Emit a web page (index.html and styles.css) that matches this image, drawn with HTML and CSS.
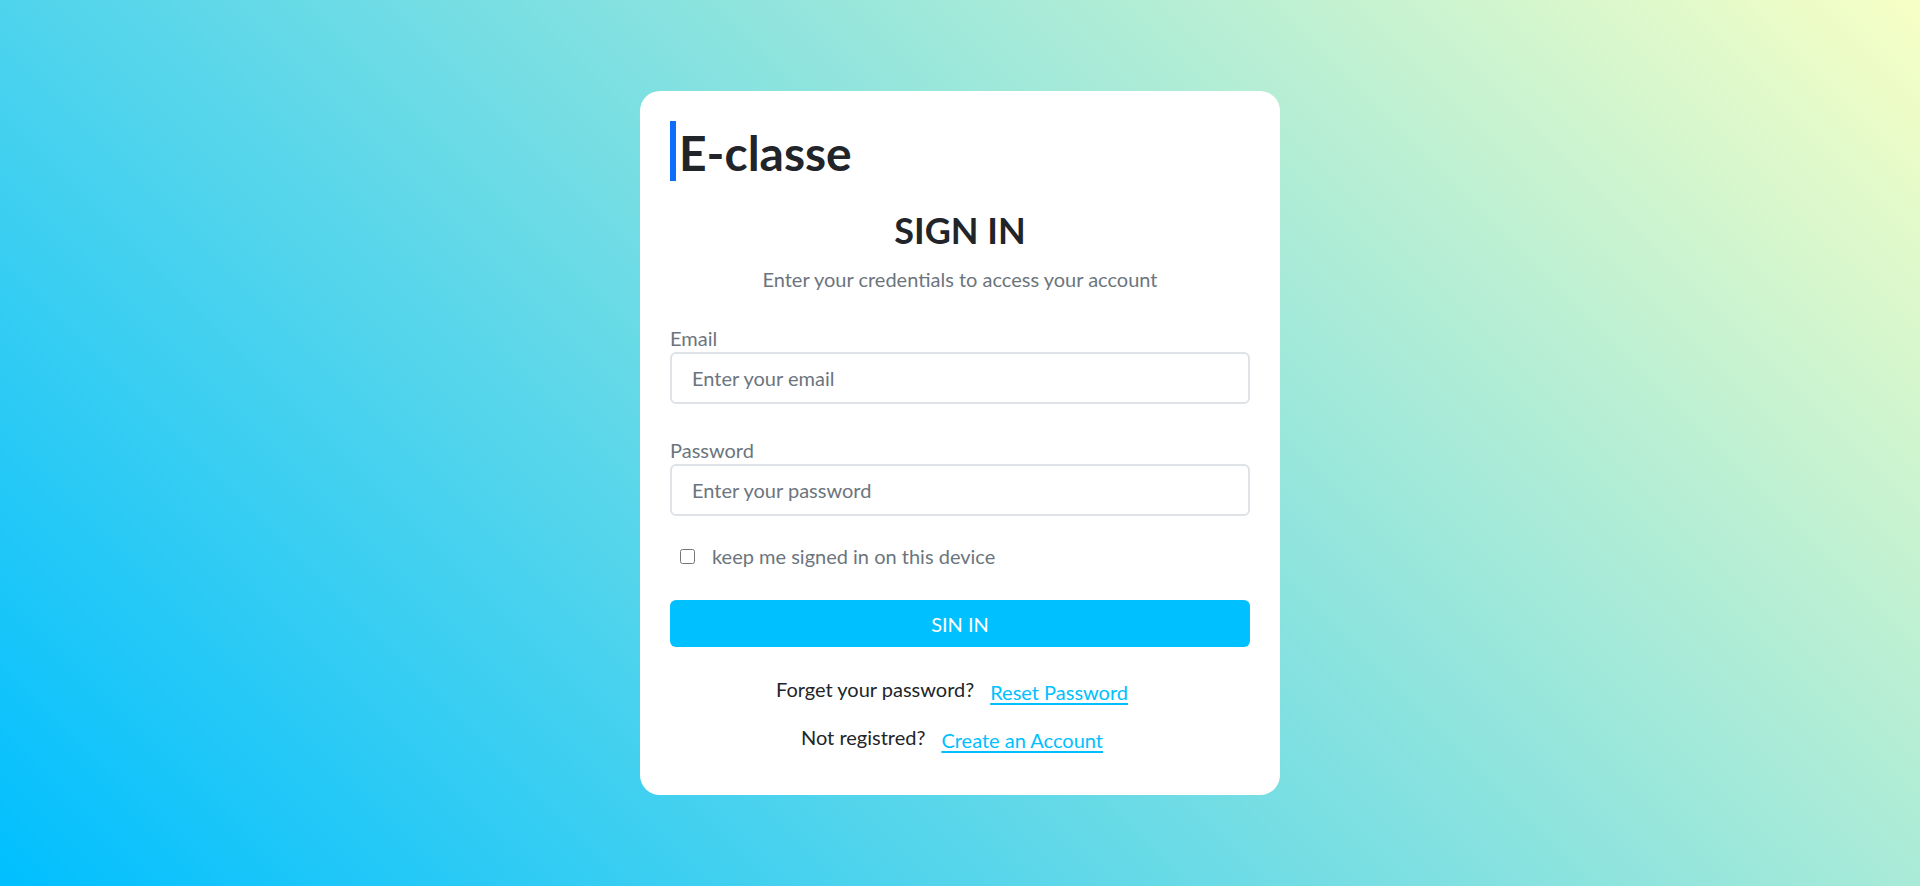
FILE: index.html
```html
<!DOCTYPE html>
<html lang="en">
<head>
<meta charset="utf-8">
<title>E-classe - Sign in</title>
<link rel="stylesheet" href="styles.css">
</head>
<body>
  <main class="page">
    <section class="card">
      <h1 class="brand">E-classe</h1>
      <h2 class="title">SIGN IN</h2>
      <p class="subtitle">Enter your credentials to access your account</p>
      <form class="form">
        <div class="field">
          <label class="label" for="email">Email</label>
          <input class="input" id="email" type="email" placeholder="Enter your email">
        </div>
        <div class="field field-second">
          <label class="label" for="password">Password</label>
          <input class="input" id="password" type="password" placeholder="Enter your password">
        </div>
        <div class="check">
          <input class="check-box" id="keep" type="checkbox">
          <label class="check-label" for="keep">keep me signed in on this device</label>
        </div>
        <button class="btn" type="button">SIN IN</button>
      </form>
      <div class="links">
        <p class="link-row"><span class="link-text">Forget your password?</span><a class="link" href="#">Reset Password</a></p>
        <p class="link-row"><span class="link-text">Not registred?</span><a class="link" href="#">Create an Account</a></p>
      </div>
    </section>
  </main>
</body>
</html>
```
FILE: styles.css
```css
* { box-sizing: border-box; }

html, body {
  margin: 0;
  height: 100%;
}

body {
  font-family: "Segoe UI", Lato, "Liberation Sans", sans-serif;
  color: #212529;
  background: linear-gradient(45deg, #00bfff 0%, #f7ffc5 100%);
}

.page {
  height: 100vh;
  display: flex;
  align-items: center;
  justify-content: center;
}

.card {
  width: 640px;
  background: #ffffff;
  border-radius: 20px;
  padding: 30px 30px 40px;
}

.brand {
  margin: 0;
  height: 60px;
  padding: 3px 0 0 3px;
  font-size: 48px;
  line-height: 57px;
  font-weight: 700;
  border-left: 6px solid #0d6efd;
  color: #212529;
}

.title {
  margin: 27px 0 0;
  font-size: 36px;
  line-height: 45px;
  font-weight: 700;
  text-align: center;
  color: #212529;
}

.subtitle {
  margin: 11px 0 0;
  font-size: 20px;
  line-height: 30px;
  text-align: center;
  color: #6c757d;
}

.form {
  margin-top: 29px;
  display: flex;
  flex-direction: column;
}

.field {
  display: flex;
  flex-direction: column;
}

.field-second {
  margin-top: 31px;
}

.label {
  font-size: 20px;
  line-height: 30px;
  color: #6c757d;
}

.input {
  height: 52px;
  margin-top: -1px;
  border: 2px solid #dfe2e6;
  border-radius: 6px;
  padding: 0 20px;
  font-family: inherit;
  font-size: 20px;
  color: #212529;
  background: #fff;
  outline: none;
}

.input::placeholder {
  color: #6c757d;
}

.check {
  margin-top: 25px;
  height: 30px;
  display: flex;
  align-items: center;
}

.check-box {
  width: 15px;
  height: 15px;
  margin: 0 0 0 10px;
}

.check-label {
  margin-left: 17px;
  font-size: 20px;
  line-height: 30px;
  color: #6c757d;
}

.btn {
  margin-top: 29px;
  height: 47px;
  border: none;
  border-radius: 6px;
  background: #00c0ff;
  color: #ffffff;
  font-family: inherit;
  font-size: 20px;
}

.links {
  margin-top: 27px;
  display: flex;
  flex-direction: column;
  gap: 15px;
}

.link-row {
  margin: 0;
  display: flex;
  justify-content: center;
  align-items: flex-start;
  padding-right: 16px;
  font-size: 20px;
  line-height: 30px;
}

.link-text {
  color: #212529;
}

.link {
  margin-left: 16px;
  padding-top: 3px;
  color: #00bfff;
  text-decoration: underline;
  text-underline-offset: 3px;
}
```
